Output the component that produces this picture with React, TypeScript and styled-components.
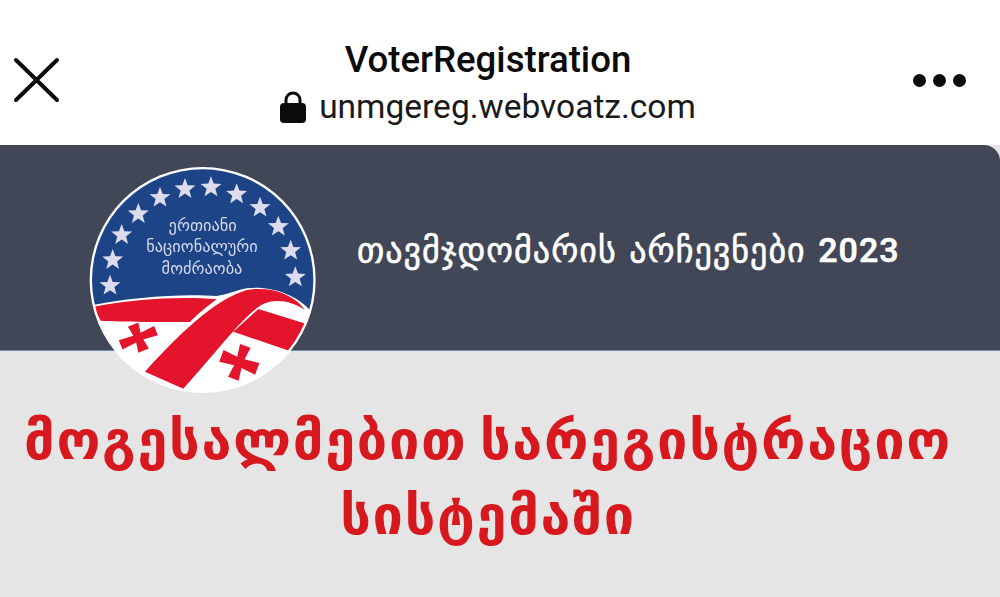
import styled, { createGlobalStyle } from "styled-components";

const GlobalStyle = createGlobalStyle`
  html, body {
    margin: 0;
    padding: 0;
    background: #e5e5e5;
  }
`;

const Page = styled.div`
  width: 1000px;
  height: 597px;
  overflow: hidden;
  position: relative;
  background: #e5e5e5;
  font-family: "Roboto", "Liberation Sans", sans-serif;
`;

const TopBar = styled.header`
  height: 145px;
  background: #fff;
  display: flex;
  align-items: flex-start;
  justify-content: space-between;
  padding: 0 34px 0 13px;
  box-sizing: border-box;
`;

const CloseButton = styled.div`
  width: 48px;
  height: 48px;
  margin-top: 57px;
`;

const TitleBlock = styled.div`
  display: flex;
  flex-direction: column;
  align-items: center;
  padding-top: 38px;
  margin-left: 2px;
`;

const SiteName = styled.div`
  font-size: 36.6px;
  line-height: 44px;
  font-weight: 500;
  color: #0b0b0b;
`;

const UrlRow = styled.div`
  display: flex;
  align-items: center;
  gap: 13px;
  margin-top: 3px;
  font-size: 33.5px;
  line-height: 44px;
  color: #1a1a1a;
`;

const MoreDots = styled.div`
  display: flex;
  gap: 7px;
  margin-top: 74px;
`;

const Dot = styled.span`
  width: 13px;
  height: 13px;
  border-radius: 50%;
  background: #0b0b0b;
`;

const Banner = styled.section`
  height: 206px;
  background: #414757;
  border-top-right-radius: 16px;
  border-bottom: 1px solid #6f8bb0;
  box-sizing: border-box;
  display: flex;
  align-items: center;
  padding: 4px 0 0 357px;
  position: relative;
`;

const BannerTitle = styled.h2`
  margin: 0;
  font-family: "Roboto", "DejaVu Sans", sans-serif;
  font-size: 34px;
  font-weight: 500;
  letter-spacing: 1.05px;
  word-spacing: 3px;
  color: #fff;
  white-space: nowrap;
  -webkit-text-stroke: 0.6px #fff;
`;

const Logo = styled.svg`
  position: absolute;
  left: 80px;
  top: 15px;
  width: 245px;
  height: 240px;
  filter: blur(0.4px);
`;

const Welcome = styled.h1`
  margin: 0;
  padding: 52px 24px 0 0;
  text-align: center;
  font-family: "DejaVu Sans", "Noto Sans", sans-serif;
  font-size: 54px;
  line-height: 75px;
  font-weight: 700;
  letter-spacing: 1.7px;
  word-spacing: -8px;
  white-space: nowrap;
  color: #d7191f;
`;

const STARS = [
  [90, 377], [98, 300], [125, 225], [175, 162], [240, 113], [315, 87],
  [393, 82], [470, 103], [540, 143], [595, 200], [632, 272], [646, 352],
];

const starPoints = (cx: number, cy: number, r: number) =>
  Array.from({ length: 10 }, (_, i) => {
    const radius = i % 2 === 0 ? r : r * 0.42;
    const angle = (Math.PI / 5) * i - Math.PI / 2;
    return `${cx + radius * Math.cos(angle)},${cy + radius * Math.sin(angle)}`;
  }).join(" ");

const CROSS =
  "M-13 -42 L13 -42 L9 -11 L44 -15 L44 15 L9 11 L13 42 L-13 42 L-9 11 L-44 15 L-44 -15 L-9 -11 Z";

function PartyLogo() {
  return (
    <Logo viewBox="0 0 735 720">
      <defs>
        <clipPath id="disc">
          <circle cx="368" cy="360" r="332" />
        </clipPath>
      </defs>
      <circle cx="368" cy="360" r="339" fill="#fff" />
      <g clipPath="url(#disc)">
        <rect x="0" y="0" width="735" height="720" fill="#fff" />
        <path
          d="M0 0 H735 V490 L690 450 C650 405 570 375 500 385 C470 390 440 405 410 408 C300 400 150 412 30 437 L0 445 Z"
          fill="#1d4487"
        />
        <path
          d="M40 440 C160 418 300 408 410 418 C380 440 350 465 330 486 C250 486 130 486 62 482 Z"
          fill="#e3142c"
        />
        <path
          d="M195 635 C290 530 400 420 500 390 C570 378 640 400 675 450 C640 425 590 415 555 430 C500 455 440 540 310 686 Z"
          fill="#e3142c"
        />
        <path d="M535 447 L680 492 L640 577 L460 515 Z" fill="#e3142c" />
        <path transform="translate(175 533) rotate(-22) scale(1.3 1)" d={CROSS} fill="#e3142c" />
        <path transform="translate(478 607) rotate(20) scale(1.3 1.25)" d={CROSS} fill="#e3142c" />
      </g>
      {STARS.map(([x, y]) => (
        <polygon key={`${x}-${y}`} points={starPoints(x, y, 33)} fill="#dcdcee" />
      ))}
      <g
        fontFamily="'DejaVu Sans', sans-serif"
        fontSize="49"
        fill="#d5d8ea"
        textAnchor="middle"
      >
        <text x="368" y="212">ერთიანი</text>
        <text x="366" y="275">ნაციონალური</text>
        <text x="366" y="343">მოძრაობა</text>
      </g>
    </Logo>
  );
}

export default function App() {
  return (
    <Page>
      <GlobalStyle />
      <TopBar>
        <CloseButton>
          <svg width="48" height="48" viewBox="0 0 48 48">
            <path
              d="M3 3 L44 43 M44 3 L3 43"
              stroke="#0b0b0b"
              strokeWidth="4"
              strokeLinecap="round"
            />
          </svg>
        </CloseButton>
        <TitleBlock>
          <SiteName>VoterRegistration</SiteName>
          <UrlRow>
            <svg width="26" height="32" viewBox="0 0 26 32">
              <path d="M6 14 V9 a7 7 0 0 1 14 0 V14" fill="none" stroke="#0b0b0b" strokeWidth="3" />
              <rect x="0" y="12" width="26" height="20" rx="4" fill="#0b0b0b" />
            </svg>
            unmgereg.webvoatz.com
          </UrlRow>
        </TitleBlock>
        <MoreDots>
          <Dot />
          <Dot />
          <Dot />
        </MoreDots>
      </TopBar>
      <Banner>
        <PartyLogo />
        <BannerTitle>თავმჯდომარის არჩევნები 2023</BannerTitle>
      </Banner>
      <Welcome>
        მოგესალმებით სარეგისტრაციო
        <br />
        სისტემაში
      </Welcome>
    </Page>
  );
}
